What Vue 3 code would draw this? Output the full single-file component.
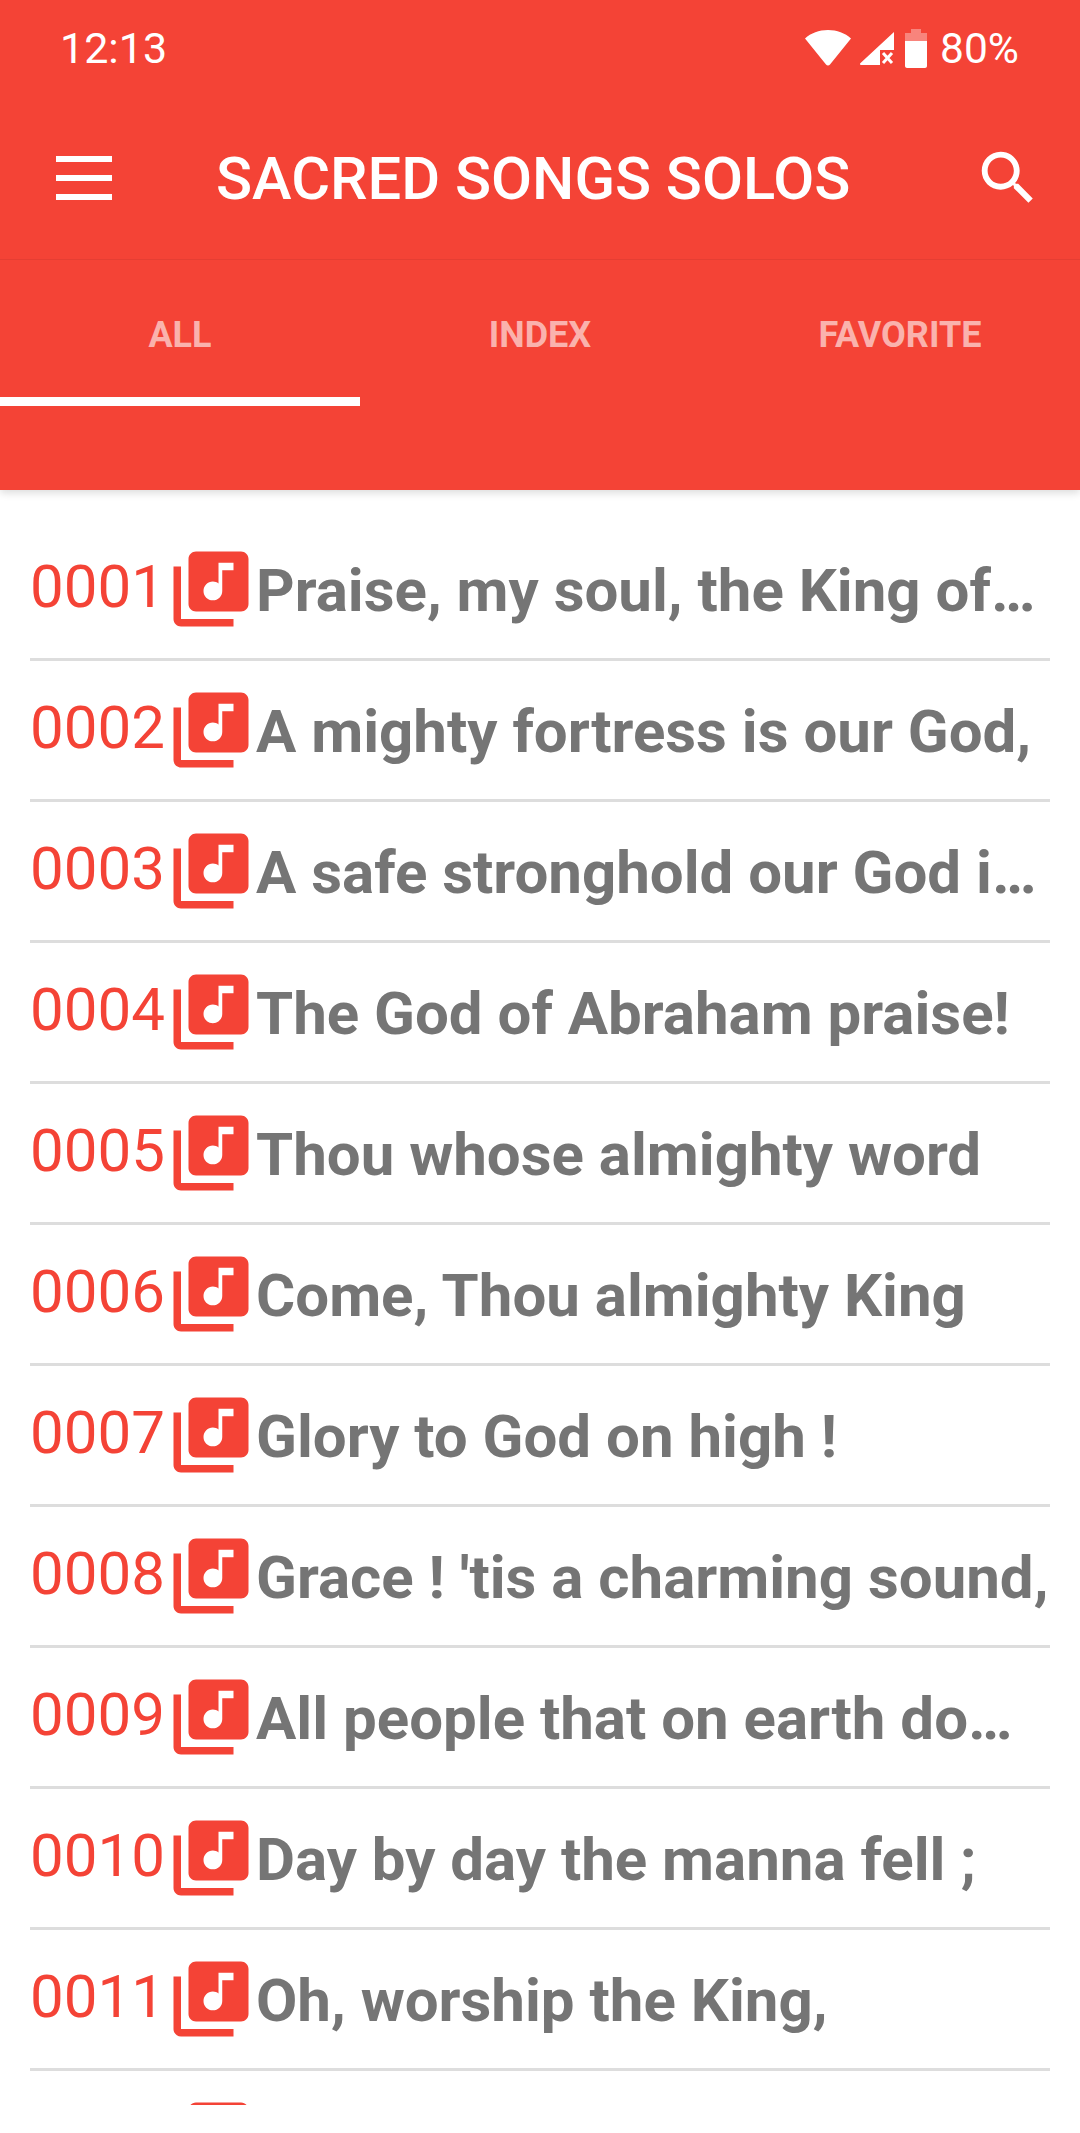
<template>
  <div class="page">
    <header class="header">
      <!-- Status bar -->
      <div class="status">
        <span class="time">12:13</span>
        <div class="status-right">
          <svg class="wifi" width="46" height="36" viewBox="0 0 46 36">
            <path d="M23 0C14 0 6 3 0 8.500L21 34.500c1 1.300 3 1.300 4 0L46 8.500C40 3 32 0 23 0z" fill="#fff" />
          </svg>
          <svg class="signal" width="34" height="33" viewBox="0 0 34 33">
            <path d="M34 0v18H20v15H1c-1 0-1.300-1-.7-1.700L34 0z" fill="#fff" />
            <path d="M23 21l9 10M32 21l-9 10" stroke="#fff" stroke-width="3" />
          </svg>
          <svg class="battery" width="22" height="39" viewBox="0 0 22 39">
            <path d="M6 0h10v4h6v8H0V4h6z" fill="#fff" opacity="0.35" />
            <path d="M0 12h22v25c0 1-1 2-2 2H2c-1 0-2-1-2-2z" fill="#fff" />
          </svg>
          <span class="percent">80%</span>
        </div>
      </div>

      <!-- Toolbar -->
      <div class="toolbar">
        <div class="menu">
          <span></span>
          <span></span>
          <span></span>
        </div>
        <h1 class="title">SACRED SONGS SOLOS</h1>
        <svg class="search" width="70" height="70" viewBox="0 0 24 24">
          <path
            d="M15.500 14h-.79l-.28-.27C15.410 12.590 16 11.110 16 9.500 16 5.910 13.090 3 9.500 3S3 5.910 3 9.500 5.910 16 9.500 16c1.610 0 3.090-.59 4.230-1.570l.27.28v.79l5 4.990L20.490 19l-4.990-5zm-6 0C7.010 14 5 11.990 5 9.500S7.010 5 9.500 5 14 7.010 14 9.500 11.990 14 9.500 14z"
            fill="#fff"
          />
        </svg>
      </div>

      <!-- Tabs -->
      <nav class="tabs">
        <div
          v-for="tab in tabs"
          :key="tab"
          class="tab"
          :class="{ active: tab === activeTab }"
        >
          {{ tab }}
        </div>
      </nav>
    </header>

    <!-- Song list -->
    <ul class="songs">
      <li v-for="(song, i) in songs" :key="i" class="song">
        <span class="number">{{ song.number }}</span>
        <svg class="note" width="90" height="90" viewBox="0 0 24 24">
          <path
            d="M20 2H8c-1.100 0-2 .9-2 2v12c0 1.100.9 2 2 2h12c1.100 0 2-.9 2-2V4c0-1.100-.9-2-2-2zm-2 5h-3v5.500c0 1.380-1.120 2.500-2.500 2.500S10 13.880 10 12.500s1.120-2.500 2.500-2.500c.57 0 1.080.19 1.500.51V5h4v2zM4 6H2v14c0 1.100.9 2 2 2h14v-2H4V6z"
            fill="#f44336"
          />
        </svg>
        <span class="name">{{ song.name }}</span>
      </li>
    </ul>
  </div>
</template>

<script setup>
const tabs = ['ALL', 'INDEX', 'FAVORITE']
const activeTab = 'ALL'

// titles are cut the way the app cuts them, last row only peeks in at the bottom
const songs = [
  { number: '0001', name: 'Praise, my soul, the King of…' },
  { number: '0002', name: 'A mighty fortress is our God,' },
  { number: '0003', name: 'A safe stronghold our God i…' },
  { number: '0004', name: 'The God of Abraham praise!' },
  { number: '0005', name: 'Thou whose almighty word' },
  { number: '0006', name: 'Come, Thou almighty King' },
  { number: '0007', name: 'Glory to God on high !' },
  { number: '0008', name: "Grace ! 'tis a charming sound," },
  { number: '0009', name: 'All people that on earth do…' },
  { number: '0010', name: 'Day by day the manna fell ;' },
  { number: '0011', name: 'Oh, worship the King,' },
  { number: '', name: '' }
]
</script>

<style>
html,
body {
  margin: 0;
  background: #fff;
  overflow: hidden;
}
</style>

<style scoped>
.page {
  display: flex;
  flex-direction: column;
  width: 1080px;
  height: 2133px;
  background: #fff;
  font-family: Roboto, 'Liberation Sans', sans-serif;
}

.header {
  position: relative;
  z-index: 1;
  flex: none;
  background: #f44336;
  color: #fff;
  box-shadow: 0 3px 8px rgba(0, 0, 0, 0.14);
}

.status {
  display: flex;
  align-items: center;
  justify-content: space-between;
  height: 96px;
  padding: 0 61px 0 60px;
  box-sizing: border-box;
  font-size: 43px;
}

.status-right {
  display: flex;
  align-items: center;
}

.signal {
  margin-left: 9px;
}

.battery {
  margin-left: 11px;
}

.percent {
  margin-left: 13px;
  font-size: 42.500px;
}

.toolbar {
  display: flex;
  align-items: center;
  height: 164px;
  box-sizing: border-box;
  padding-left: 56px;
  border-bottom: 1px solid #e53e33;
}

.menu {
  display: flex;
  flex-direction: column;
  gap: 13px;
  width: 56px;
}

.menu span {
  display: block;
  height: 6px;
  background: #fff;
}

.title {
  margin: 2px 0 0 104px;
  font-size: 59.600px;
  font-weight: 500;
  white-space: nowrap;
}

.search {
  margin-left: 123px;
}

.tabs {
  display: flex;
  padding-bottom: 84px;
}

.tab {
  display: flex;
  flex: 1;
  align-items: center;
  justify-content: center;
  height: 146px;
  box-sizing: border-box;
  padding-top: 13px;
  border-bottom: 9px solid transparent;
  color: rgba(255, 255, 255, 0.6);
  font-size: 36px;
  font-weight: 700;
}

.tab.active {
  border-bottom-color: #fff;
}

.songs {
  flex: 1;
  min-height: 0;
  margin: 0 0 28px;
  padding: 30px 30px 0;
  overflow: hidden;
  list-style: none;
}

.song {
  display: flex;
  align-items: center;
  height: 141px;
  box-sizing: border-box;
  border-bottom: 3px solid #ddd;
}

.number {
  flex: none;
  width: 136px;
  margin-top: -6px;
  color: #f44336;
  font-size: 60px;
  font-weight: 400;
  white-space: nowrap;
}

.note {
  flex: none;
}

.name {
  flex: 1;
  min-width: 0;
  margin-top: 2px;
  color: #757575;
  font-size: 60px;
  font-weight: 700;
  white-space: nowrap;
}
</style>
